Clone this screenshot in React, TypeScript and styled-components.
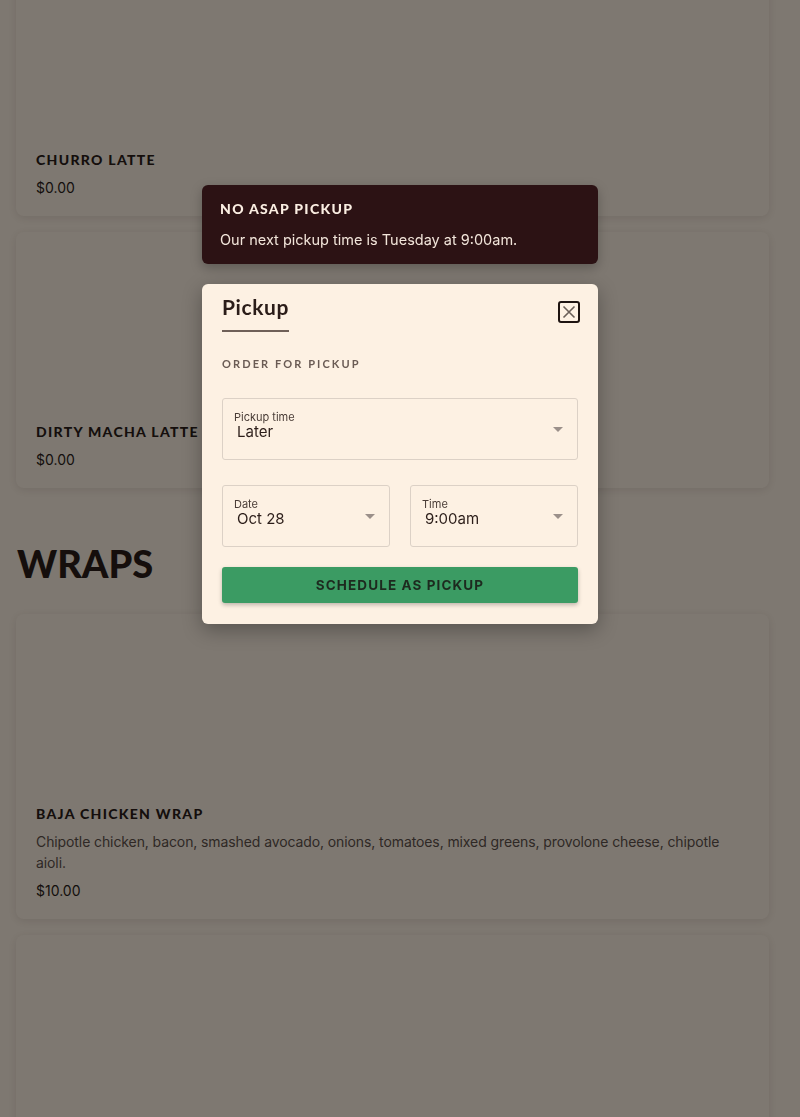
import React from 'react';
import styled, { createGlobalStyle } from 'styled-components';

const Colors = {
  cream: '#fdf1e3',
  ink: '#2b1d19',
  muted: '#5e514b',
  toast: '#2c1214',
  green: '#3b9b63',
  field: '#dcd1c6',
};

const GlobalStyle = createGlobalStyle`
  html, body {
    margin: 0;
    padding: 0;
    background: ${Colors.cream};
    font-family: Inter, 'Noto Sans', sans-serif;
    color: ${Colors.ink};
    overflow: hidden;
  }
`;

const Page = styled.div`
  padding: 0 31px 0 16px;
  margin-top: -40px;
`;

const Card = styled.div`
  background: ${Colors.cream};
  border-radius: 8px;
  box-shadow: 0 2px 10px rgba(60, 40, 30, 0.12);
  padding: 20px 20px 18px;
  margin-bottom: 16px;
`;

const ImageSpace = styled.div<{ $tall?: boolean }>`
  height: ${(p) => (p.$tall ? '240px' : '170px')};
`;

const ItemName = styled.div`
  font-family: Lato, sans-serif;
  font-weight: 900;
  font-size: 14px;
  line-height: 20px;
  letter-spacing: 1.3px;
  text-transform: uppercase;
  color: ${Colors.ink};
`;

const ItemDesc = styled.div`
  margin-top: 7px;
  font-size: 14px;
  line-height: 21px;
  color: ${Colors.muted};
  letter-spacing: -0.1px;
`;

const ItemPrice = styled.div`
  margin-top: 8px;
  font-size: 14px;
  line-height: 20px;
  color: ${Colors.ink};
`;

const SectionTitle = styled.h2`
  font-family: Lato, sans-serif;
  font-weight: 900;
  font-size: 38px;
  line-height: 48px;
  margin: 51px 0 27px 1px;
  color: ${Colors.ink};
`;

const Overlay = styled.div`
  position: fixed;
  inset: 0;
  background: rgba(0, 0, 0, 0.5);
`;

const Stack = styled.div`
  position: fixed;
  top: 185px;
  left: 202px;
  width: 396px;
  display: flex;
  flex-direction: column;
  gap: 20px;
`;

const Toast = styled.div`
  background: ${Colors.toast};
  border-radius: 6px;
  padding: 15px 18px 14px;
  box-shadow: 0 4px 12px rgba(0, 0, 0, 0.25);
`;

const ToastTitle = styled.div`
  font-family: Lato, sans-serif;
  font-weight: 900;
  font-size: 14px;
  line-height: 18px;
  letter-spacing: 1.3px;
  color: #fbeee2;
`;

const ToastText = styled.div`
  margin-top: 12px;
  font-size: 14.5px;
  line-height: 20px;
  color: #f2e5da;
`;

const Modal = styled.div`
  background: ${Colors.cream};
  border-radius: 6px;
  padding: 12px 20px 21px;
  box-shadow: 0 6px 20px rgba(0, 0, 0, 0.3);
`;

const ModalHeader = styled.div`
  display: flex;
  justify-content: space-between;
  align-items: flex-start;
`;

const ModalTitle = styled.div`
  font-family: Lato, sans-serif;
  font-weight: 700;
  font-size: 21px;
  line-height: 22px;
  letter-spacing: 0.6px;
  padding-bottom: 12px;
  border-bottom: 2px solid #6f6058;
  color: ${Colors.ink};
`;

const CloseButton = styled.button`
  margin: 5px -2px 0 0;
  width: 22px;
  height: 22px;
  padding: 0;
  border: 2px solid #1e1411;
  border-radius: 3px;
  background: transparent;
  display: flex;
  align-items: center;
  justify-content: center;
`;

const Eyebrow = styled.div`
  margin-top: 25px;
  font-family: Lato, sans-serif;
  font-weight: 700;
  font-size: 11px;
  line-height: 14px;
  letter-spacing: 2.1px;
  color: #6a5b54;
`;

const Row = styled.div<{ $first?: boolean }>`
  display: grid;
  grid-template-columns: 1fr 1fr;
  gap: 20px;
  margin-top: ${(p) => (p.$first ? '27px' : '25px')};
`;

const Field = styled.div<{ $wide?: boolean }>`
  grid-column: ${(p) => (p.$wide ? '1 / -1' : 'auto')};
  height: 62px;
  box-sizing: border-box;
  border: 1px solid ${Colors.field};
  border-radius: 3px;
  padding: 11px 11px 0;
  position: relative;
`;

const FieldLabel = styled.div`
  font-size: 11px;
  line-height: 14px;
  color: #4a3d37;
`;

const FieldValue = styled.div`
  padding-left: 3px;
  font-size: 15px;
  line-height: 16px;
  color: ${Colors.ink};
`;

const Caret = styled.span`
  position: absolute;
  right: 14px;
  top: 28px;
  width: 0;
  height: 0;
  border-left: 5px solid transparent;
  border-right: 5px solid transparent;
  border-top: 5px solid #9b908a;
`;

const ScheduleButton = styled.button`
  margin-top: 20px;
  width: 100%;
  height: 36px;
  border: none;
  border-radius: 3px;
  background: ${Colors.green};
  box-shadow: 0 2px 4px rgba(0, 0, 0, 0.25);
  font-family: Inter, sans-serif;
  font-weight: 700;
  font-size: 13.5px;
  letter-spacing: 1.1px;
  color: #1d2a1f;
`;

const items = [
  { name: 'Churro Latte', price: '$0.00' },
  { name: 'Dirty Macha Latte', price: '$0.00' },
];

export default function App() {
  return (
    <>
      <GlobalStyle />
      <Page>
        {items.map((item) => (
          <Card key={item.name}>
            <ImageSpace />
            <ItemName>{item.name}</ItemName>
            <ItemPrice>{item.price}</ItemPrice>
          </Card>
        ))}
        <SectionTitle>WRAPS</SectionTitle>
        <Card>
          <ImageSpace />
          <ItemName>Baja Chicken Wrap</ItemName>
          <ItemDesc>
            Chipotle chicken, bacon, smashed avocado, onions, tomatoes, mixed greens, provolone
            cheese, chipotle aioli.
          </ItemDesc>
          <ItemPrice>$10.00</ItemPrice>
        </Card>
        <Card>
          <ImageSpace $tall />
        </Card>
      </Page>
      <Overlay />
      <Stack>
        <Toast>
          <ToastTitle>NO ASAP PICKUP</ToastTitle>
          <ToastText>Our next pickup time is Tuesday at 9:00am.</ToastText>
        </Toast>
        <Modal>
          <ModalHeader>
            <ModalTitle>Pickup</ModalTitle>
            <CloseButton aria-label="Close">
              <svg width="14" height="14" viewBox="0 0 14 14">
                <path d="M1.5 1.5 L12.5 12.5 M12.5 1.5 L1.5 12.5" stroke="#6b5f58" strokeWidth="1.6" />
              </svg>
            </CloseButton>
          </ModalHeader>
          <Eyebrow>ORDER FOR PICKUP</Eyebrow>
          <Row $first>
            <Field $wide>
              <FieldLabel>Pickup time</FieldLabel>
              <FieldValue>Later</FieldValue>
              <Caret />
            </Field>
          </Row>
          <Row>
            <Field>
              <FieldLabel>Date</FieldLabel>
              <FieldValue>Oct 28</FieldValue>
              <Caret />
            </Field>
            <Field>
              <FieldLabel>Time</FieldLabel>
              <FieldValue>9:00am</FieldValue>
              <Caret />
            </Field>
          </Row>
          <ScheduleButton>SCHEDULE AS PICKUP</ScheduleButton>
        </Modal>
      </Stack>
    </>
  );
}
